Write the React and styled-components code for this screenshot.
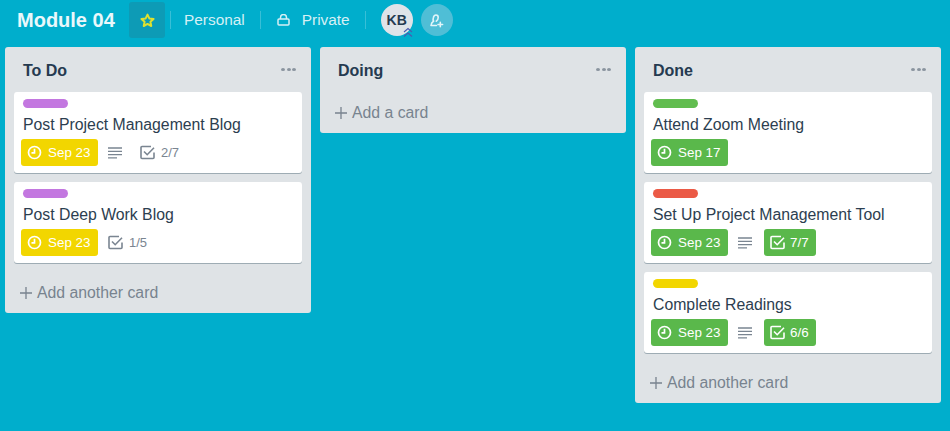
import React from 'react'
import styled, { createGlobalStyle } from 'styled-components'

const GlobalStyle = createGlobalStyle`
  html, body {
    margin: 0;
    padding: 0;
    background: #00aecc;
    font-family: "Liberation Sans", Arial, sans-serif;
  }
`

const Page = styled.div`
  width: 950px;
  height: 431px;
  overflow: hidden;
  background: #00aecc;
`

const Toolbar = styled.div`
  height: 47px;
  display: flex;
  align-items: flex-start;
  padding: 2px 0 0 17px;
  box-sizing: border-box;
`

const BoardTitle = styled.h1`
  margin: 0 14px 0 0;
  font-size: 20px;
  line-height: 36px;
  font-weight: 700;
  color: #eaf8fb;
  width: 98px;
  white-space: nowrap;
`

const StarButton = styled.div`
  width: 36px;
  height: 36px;
  border-radius: 3px;
  background: #0d9bb6;
  display: flex;
  align-items: center;
  justify-content: center;
`

const Divider = styled.span`
  width: 1px;
  height: 18px;
  margin: 9px ${(p) => p.$right}px 0 ${(p) => p.$left}px;
  background: rgba(255, 255, 255, 0.22);
`

const BarText = styled.span`
  font-size: 15.4px;
  line-height: 36px;
  color: #d6f0f5;
  white-space: nowrap;
`

const LockSlot = styled.span`
  width: 14px;
  height: 36px;
  margin-right: 11px;
  display: flex;
  align-items: center;
`

const Avatar = styled.div`
  position: relative;
  width: 32px;
  height: 32px;
  margin-top: 2px;
  border-radius: 50%;
  background: #dfe3e8;
  color: #253a50;
  font-size: 14px;
  font-weight: 700;
  line-height: 32px;
  text-align: center;
`

const AdminBadge = styled.span`
  position: absolute;
  right: 0;
  bottom: -2px;
  width: 10px;
  height: 11px;
  display: flex;
`

const InviteButton = styled.div`
  width: 32px;
  height: 32px;
  margin: 2px 0 0 8px;
  border-radius: 50%;
  background: #4fbed6;
  display: flex;
  align-items: center;
  justify-content: center;
`

const Board = styled.div`
  display: flex;
  align-items: flex-start;
  gap: 9px;
  padding-left: 5px;
`

const Column = styled.section`
  width: 306px;
  box-sizing: border-box;
  background: #dfe3e6;
  border-radius: 3px;
  padding: 0 9px;
`

const ColumnHeader = styled.header`
  height: 45px;
  display: flex;
  justify-content: space-between;
  align-items: flex-start;
  padding: 15px 6px 0 9px;
  box-sizing: border-box;
`

const ColumnTitle = styled.h2`
  margin: 0;
  font-size: 16px;
  line-height: 18px;
  font-weight: 700;
  color: #253a50;
`

const Dots = styled.span`
  display: flex;
  gap: 1.5px;
  margin-top: 6px;
  & > i {
    width: 4px;
    height: 3px;
    border-radius: 50%;
    background: #8a949f;
  }
`

const CardList = styled.div`
  display: flex;
  flex-direction: column;
  gap: 9px;
`

const Card = styled.article`
  height: 81px;
  box-sizing: border-box;
  background: #fff;
  border-radius: 3px;
  box-shadow: 0 1px 0 rgba(9, 45, 66, 0.3);
  padding: 7px 7px 0;
`

const Label = styled.div`
  width: 45px;
  height: 9px;
  margin-left: 2px;
  border-radius: 5px;
  background: ${(p) => p.$color};
`

const CardTitle = styled.div`
  margin: 7px 0 0 2px;
  font-size: 15.8px;
  line-height: 20px;
  color: #2c3e50;
  white-space: nowrap;
`

const MetaRow = styled.div`
  display: flex;
  align-items: center;
  height: 27px;
  margin-top: 4px;
`

const DueBadge = styled.span`
  display: flex;
  align-items: center;
  height: 27px;
  width: ${(p) => p.$width}px;
  box-sizing: border-box;
  padding-left: 6px;
  gap: ${(p) => (p.$check ? 5 : 6)}px;
  border-radius: 3px;
  background: ${(p) => p.$color};
  color: #fff;
  font-size: 13.4px;
`

const MetaIcon = styled.span`
  display: flex;
  margin: 0 ${(p) => p.$right}px 0 ${(p) => p.$left}px;
`

const MetaText = styled.span`
  font-size: 13px;
  color: #7a8591;
`

const AddRow = styled.div`
  display: flex;
  align-items: center;
  gap: 5px;
  height: ${(p) => p.$height}px;
  padding: ${(p) => p.$top}px 0 0 6px;
  box-sizing: border-box;
  font-size: 15.8px;
  color: #78838f;
`

const ClockIcon = ({ color = '#fff' }) => (
  <svg width="15" height="15" viewBox="0 0 15 15" fill="none" stroke={color} strokeWidth="1.7">
    <circle cx="7.5" cy="7.5" r="6" />
    <path d="M7.5 3.8v4h-3" />
  </svg>
)

const CheckIcon = ({ color = '#7a8591' }) => (
  <svg width="15" height="15" viewBox="0 0 15 15" fill="none" stroke={color} strokeWidth="1.6">
    <path d="M14 7.5V12.5a1 1 0 0 1-1 1H2a1 1 0 0 1-1-1V2.5a1 1 0 0 1 1-1h9" />
    <path d="M4 6.5l3.2 3.2L14 2.8" />
  </svg>
)

const DescriptionIcon = () => (
  <svg width="14" height="12" viewBox="0 0 14 12" fill="none" stroke="#7a8591" strokeWidth="1.3">
    <path d="M0 1h14M0 4.3h14M0 7.6h14M0 10.9h9" />
  </svg>
)

const PlusIcon = () => (
  <svg width="12" height="12" viewBox="0 0 12 12" stroke="#78838f" strokeWidth="1.3">
    <path d="M6 0v12M0 6h12" />
  </svg>
)

const YELLOW = '#f2d600'
const GREEN = '#5ab84b'

const columns = [
  {
    title: 'To Do',
    add: 'Add another card',
    cards: [
      { label: '#c377e0', title: 'Post Project Management Blog', due: 'Sep 23', dueColor: YELLOW, description: true, check: '2/7' },
      { label: '#c377e0', title: 'Post Deep Work Blog', due: 'Sep 23', dueColor: YELLOW, check: '1/5' },
    ],
  },
  { title: 'Doing', add: 'Add a card', cards: [] },
  {
    title: 'Done',
    add: 'Add another card',
    cards: [
      { label: '#61bd4f', title: 'Attend Zoom Meeting', due: 'Sep 17', dueColor: GREEN },
      { label: '#eb5a46', title: 'Set Up Project Management Tool', due: 'Sep 23', dueColor: GREEN, description: true, check: '7/7', checkDone: true },
      { label: YELLOW, title: 'Complete Readings', due: 'Sep 23', dueColor: GREEN, description: true, check: '6/6', checkDone: true },
    ],
  },
]

function CardMeta({ card }) {
  return (
    <MetaRow>
      <DueBadge $color={card.dueColor} $width={77}>
        <ClockIcon />
        {card.due}
      </DueBadge>
      {card.description && (
        <MetaIcon $left={10} $right={card.checkDone ? 12 : 18}>
          <DescriptionIcon />
        </MetaIcon>
      )}
      {card.check && !card.checkDone && (
        <>
          <MetaIcon $left={card.description ? 0 : 10} $right={6}>
            <CheckIcon />
          </MetaIcon>
          <MetaText>{card.check}</MetaText>
        </>
      )}
      {card.checkDone && (
        <DueBadge $check $color={GREEN} $width={52}>
          <CheckIcon color="#fff" />
          {card.check}
        </DueBadge>
      )}
    </MetaRow>
  )
}

export default function App() {
  return (
    <Page>
      <GlobalStyle />
      <Toolbar>
        <BoardTitle>Module 04</BoardTitle>
        <StarButton>
          <svg width="15" height="15" viewBox="0 0 24 24" fill="none" stroke="#dfe02f" strokeWidth="3.2" strokeLinejoin="round">
            <path d="M12 2.5l2.9 6.2 6.8.8-5 4.6 1.3 6.7L12 17.5l-6 3.3 1.3-6.7-5-4.6 6.8-.8z" />
          </svg>
        </StarButton>
        <Divider $left={5} $right={13} />
        <BarText>Personal</BarText>
        <Divider $left={15} $right={16} />
        <LockSlot>
          <svg width="13" height="12" viewBox="0 0 13 12" fill="none" stroke="#d6f0f5" strokeWidth="1.5">
            <rect x="1" y="5" width="11" height="6" rx="1" />
            <path d="M3.5 5V3.5a3 3 0 0 1 6 0V5" />
          </svg>
        </LockSlot>
        <BarText>Private</BarText>
        <Divider $left={15} $right={15} />
        <Avatar>
          KB
          <AdminBadge>
            <svg width="10" height="11" viewBox="0 0 10 11" fill="none" stroke="#4a5bb0" strokeWidth="1.1">
              <path d="M1 5l4-3.500L9 5M1 9.500L5 6l4 3.500" />
            </svg>
          </AdminBadge>
        </Avatar>
        <InviteButton>
          <svg width="15" height="15" viewBox="0 0 15 15" fill="none" stroke="#e2f5f9" strokeWidth="1.600" strokeLinecap="round" strokeLinejoin="round">
            <path d="M4.500 8.200C4 7.200 4 5.800 4.400 4.500 4.800 3 5.800 2 7 2s2.200 1 2.200 2.500c0 1.600-.8 3-2 3.700" />
            <path d="M4.500 8.200C3 9 2.200 10.500 2 12.500h5.500" />
            <path d="M11.300 9.200v4.600M9 11.500h4.600" />
          </svg>
        </InviteButton>
      </Toolbar>
      <Board>
        {columns.map((column) => (
          <Column key={column.title}>
            <ColumnHeader>
              <ColumnTitle>{column.title}</ColumnTitle>
              <Dots>
                <i />
                <i />
                <i />
              </Dots>
            </ColumnHeader>
            {column.cards.length > 0 && (
              <CardList>
                {column.cards.map((card) => (
                  <Card key={card.title}>
                    <Label $color={card.label} />
                    <CardTitle>{card.title}</CardTitle>
                    <CardMeta card={card} />
                  </Card>
                ))}
              </CardList>
            )}
            <AddRow $height={column.cards.length ? 50 : 41} $top={column.cards.length ? 10 : 0}>
              <PlusIcon />
              {column.add}
            </AddRow>
          </Column>
        ))}
      </Board>
    </Page>
  )
}
